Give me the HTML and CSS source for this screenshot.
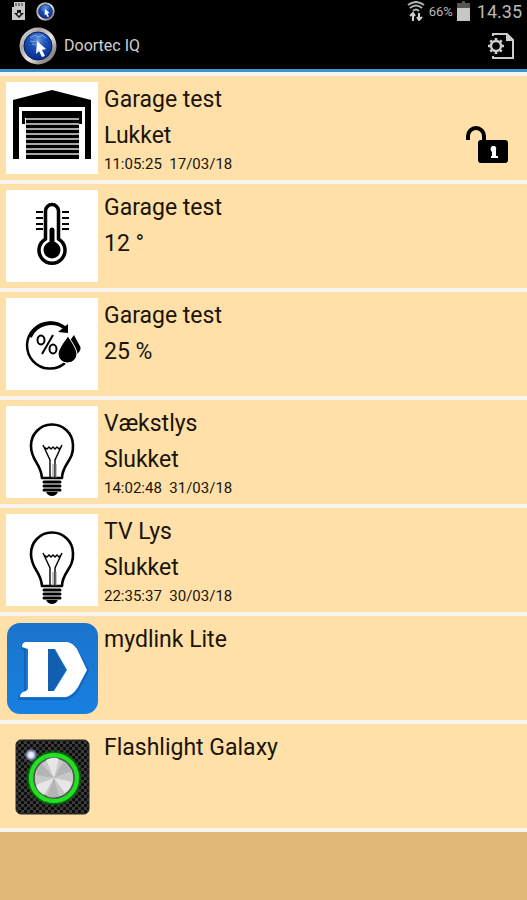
FILE: index.html
```html
<!DOCTYPE html>
<html lang="da">
<head>
  <meta charset="UTF-8">
  <meta name="viewport" content="width=device-width, initial-scale=1.0">
  <title>Doortec IQ</title>
  <link rel="stylesheet" href="styles.css">
</head>
<body>
  <!-- Shared icons -->
  <svg class="defs" width="0" height="0" aria-hidden="true">
    <defs>
      <linearGradient id="chrome" x1="0" y1="0" x2="1" y2="1">
        <stop offset="0" stop-color="#f2f2f2"/>
        <stop offset="0.3" stop-color="#a8a4a3"/>
        <stop offset="0.55" stop-color="#ece6e4"/>
        <stop offset="0.8" stop-color="#8c8684"/>
        <stop offset="1" stop-color="#d5d1cf"/>
      </linearGradient>
      <radialGradient id="globe" cx="0.5" cy="0.25" r="0.75">
        <stop offset="0" stop-color="#5f93dc"/>
        <stop offset="0.4" stop-color="#1c53b8"/>
        <stop offset="1" stop-color="#062a96"/>
      </radialGradient>
    </defs>
    <symbol id="logo" viewBox="0 0 38 38">
      <circle cx="19" cy="19" r="18.500" fill="url(#chrome)"/>
      <circle cx="19" cy="19" r="14" fill="url(#globe)" stroke="#0a1c4c" stroke-width="1"/>
      <path d="M11 11l5-3 3 2 4-2 4 3M11 14l5 1 3-2 2 3M13 17l4 1" fill="none" stroke="#9dbdf0" stroke-width="1" opacity="0.7"/>
      <path d="M18 14l9 8-4 1 3 6-3 1-3-6-3 3z" fill="#fff"/>
    </symbol>
    <symbol id="bulb" viewBox="0 0 92 92">
      <path d="M36 72C35 57 25 55 25 40a21 21 0 0 1 42-1C68 55 56 58 56 72z" fill="none" stroke="#000" stroke-width="2.600" stroke-linejoin="round"/>
      <path d="M37 39l7 15v18M56 39l-7 15v18M38 41l3 2 2-2 2 2 2-2 2 2 2-2 2 2 2-2" fill="none" stroke="#000" stroke-width="1.4"/>
      <path d="M47 58v14M50 58v14" stroke="#888" stroke-width="1"/>
      <path d="M38 76h16M38 80h16M38 84h16" stroke="#000" stroke-width="3" stroke-linecap="round"/>
      <path d="M40 86h12q-2 4-6 4t-6-4z"/>
    </symbol>
  </svg>

  <!-- Status bar -->
  <div class="status">
    <div class="status-group">
      <svg width="14" height="20" viewBox="0 0 14 20">
        <path d="M2 1h11v18H0V6h2z" fill="#c8c8c8"/>
        <path d="M4 2v3M7 2v3M10 2v3" stroke="#333" stroke-width="1"/>
        <path d="M5 9h4v3h3l-5 5-5-5h3z" fill="#111"/>
        <circle cx="7" cy="13" r="1.6" fill="#c8c8c8"/>
      </svg>
      <svg width="19" height="19"><use href="#logo"/></svg>
    </div>
    <div class="status-group status-right">
      <svg width="18" height="20" viewBox="0 0 18 20">
        <path d="M1 4q8-6 16 0M3 7q6-5 12 0M6 10q3-3 6 0" fill="none" stroke="#b4b4b4" stroke-width="2"/>
        <path d="M6 20v-7M3 15l3-3 2 3M12 12v7M10 16l2 3 3-3" fill="none" stroke="#d0d0d0" stroke-width="2"/>
      </svg>
      <span class="battery-text">66%</span>
      <svg width="13" height="20" viewBox="0 0 13 20">
        <path d="M5 0h3v2h5v5H0V2h5z" fill="#555"/>
        <path d="M0 7h13v13H0z" fill="#c6c6c6"/>
      </svg>
      <span class="clock">14.35</span>
    </div>
  </div>

  <!-- Header -->
  <header>
    <svg width="38" height="38"><use href="#logo"/></svg>
    <h1>Doortec IQ</h1>
    <button type="button" class="settings" aria-label="Indstillinger">
      <svg width="28" height="28" viewBox="0 0 28 28">
        <path d="M6 4V2h14l6 6v18H6v-2" fill="none" stroke="#ccc" stroke-width="2"/>
        <path d="M19 1v8h8z" fill="#ccc"/>
        <circle cx="9" cy="14" r="5" fill="none" stroke="#ccc" stroke-width="2.4"/>
        <g stroke="#ccc" stroke-width="2.6">
          <path d="M9 6v3M9 19v3M1 14h3M14 14h3"/>
          <path d="M3.3 8.3l2.2 2.2M12.5 17.5l2.2 2.2M3.3 19.7l2.2-2.2M12.5 10.5l2.2-2.2"/>
        </g>
      </svg>
    </button>
  </header>

  <!-- Device list -->
  <ul class="devices">
    <li>
      <svg class="thumb white" viewBox="0 0 92 92">
        <path d="M7 18L46 8l39 10v59h-6V25H13v52H7z"/>
        <path d="M16 29h60v7H16zM16 36h3v6h-3zM73 36h3v6h-3z"/>
        <path d="M20 36h53v41H20z"/>
        <path d="M20 37h53M20 42h53M20 47h53M20 52h53M20 57h53M20 62h53M20 67h53M20 72h53" stroke="#ddd" stroke-width="1.4"/>
      </svg>
      <div class="info">
        <h2>Garage test</h2>
        <p>Lukket</p>
        <time>11:05:25&nbsp; 17/03/18</time>
      </div>
      <button type="button" class="lock" aria-label="Lås op">
        <svg width="44" height="40" viewBox="0 0 44 40">
          <path d="M3 15v-4a8 8 0 0 1 16 0v6" fill="none" stroke="#000" stroke-width="4"/>
          <rect x="13" y="15" width="30" height="23" rx="3"/>
          <path d="M27 21h3q2 2 1 4v6h2v2h-7v-2h1v-4q-3-3 0-6z" fill="#fff"/>
        </svg>
      </button>
    </li>
    <li>
      <svg class="thumb white" viewBox="0 0 92 92">
        <path d="M39.500 49V21a6.500 6.500 0 0 1 13 0v28a13 13 0 1 1-13 0z" fill="none" stroke="#000" stroke-width="3.500"/>
        <circle cx="46" cy="60" r="8.500"/>
        <path d="M46 40v18" stroke="#000" stroke-width="5" stroke-linecap="round"/>
        <path d="M30 22h7M30 28h7M30 34h7M30 39h7M56 22h7M56 28h7M56 34h7M56 39h7" stroke="#000" stroke-width="2.200"/>
      </svg>
      <div class="info">
        <h2>Garage test</h2>
        <p>12 °</p>
      </div>
    </li>
    <li>
      <svg class="thumb white" viewBox="0 0 92 92">
        <path d="M59 65a23 23 0 1 1 1-34" fill="none" stroke="#000" stroke-width="2.500"/>
        <path d="M24 39a23 23 0 0 1 35-9" fill="none" stroke="#000" stroke-width="3.500"/>
        <path d="M62 26v9l-10-1z"/>
        <g fill="none" stroke="#000" stroke-width="2">
          <ellipse cx="35" cy="42" rx="3.500" ry="4.500"/>
          <ellipse cx="47" cy="51" rx="3.500" ry="4.500"/>
          <path d="M47 37L36 56"/>
        </g>
        <path d="M68 37q-6 7-5 15 2 7 8 4 5-4 3-8-3-5-6-11z"/>
        <path d="M62 38q-10 13-10 18a9.500 9 0 0 0 19 0q0-5-9-18z" stroke="#fff" stroke-width="1"/>
      </svg>
      <div class="info">
        <h2>Garage test</h2>
        <p>25 %</p>
      </div>
    </li>
    <li>
      <svg class="thumb white"><use href="#bulb"/></svg>
      <div class="info">
        <h2>Vækstlys</h2>
        <p>Slukket</p>
        <time>14:02:48&nbsp; 31/03/18</time>
      </div>
    </li>
    <li>
      <svg class="thumb white"><use href="#bulb"/></svg>
      <div class="info">
        <h2>TV Lys</h2>
        <p>Slukket</p>
        <time>22:35:37&nbsp; 30/03/18</time>
      </div>
    </li>
    <li>
      <svg class="thumb" viewBox="0 0 92 92">
        <defs>
          <linearGradient id="blue" x1="0" y1="0" x2="0" y2="1">
            <stop offset="0" stop-color="#1a74cc"/>
            <stop offset="1" stop-color="#1780e0"/>
          </linearGradient>
        </defs>
        <rect x="1" y="1" width="91" height="91" rx="13" fill="url(#blue)"/>
        <path d="M42 27h6l12 21-13 21h-5z" fill="#125fb2"/>
        <path d="M19 21h42q7 1 10 7l11 20-9 18q-5 9-13 11H13q0-5 6-7V28l-3-2q0-4 3-5z" fill="none" stroke="#0b4f9d" stroke-width="2" opacity="0.5"/>
        <path d="M19 20h42q6 1 10 7l10 21-9 17q-5 8-12 10H14q0-5 6-6l2-2V27l-6-2q0-4 3-5zM42 27v42h6l13-21-12-21z" fill="#fff" fill-rule="evenodd"/>
      </svg>
      <div class="info">
        <h2>mydlink Lite</h2>
      </div>
    </li>
    <li>
      <svg class="thumb" viewBox="0 4 92 92">
        <defs>
          <pattern id="mesh" width="6" height="6" patternUnits="userSpaceOnUse">
            <rect width="6" height="6" fill="#3c3c3c"/>
            <circle cx="1.500" cy="1.500" r="1.700" fill="#0b0b0b"/>
            <circle cx="4.500" cy="4.500" r="1.700" fill="#0b0b0b"/>
          </pattern>
          <radialGradient id="glow">
            <stop offset="0.7" stop-color="#13d013"/>
            <stop offset="0.86" stop-color="#0d8a0d"/>
            <stop offset="1" stop-color="#0a3a0a" stop-opacity="0"/>
          </radialGradient>
          <radialGradient id="spark">
            <stop offset="0" stop-color="#fff"/>
            <stop offset="0.4" stop-color="#d4dcff"/>
            <stop offset="1" stop-color="#8090d0" stop-opacity="0"/>
          </radialGradient>
        </defs>
        <rect x="10" y="14" width="73" height="74" rx="5" fill="url(#mesh)" stroke="#2a2a2a"/>
        <circle cx="48" cy="52" r="29" fill="url(#glow)"/>
        <circle cx="48" cy="52" r="23" fill="none" stroke="#22e022" stroke-width="4"/>
        <circle cx="48" cy="52" r="20" fill="#c8c8c8" stroke="#555" stroke-width="1.500"/>
        <path d="M48 52L40 34q8-4 13-1zM48 52l18 4q-2 8-7 11zM48 52L38 69q-7-4-8-10z" fill="#e6e6e6"/>
        <path d="M48 52l9-16q7 4 9 9zM48 52l-18-3q2-8 6-11zM48 52l5 18q-7 3-12 0z" fill="#b4b4b4"/>
        <circle cx="25" cy="29" r="7" fill="url(#spark)"/>
      </svg>
      <div class="info">
        <h2>Flashlight Galaxy</h2>
      </div>
    </li>
  </ul>
</body>
</html>
```

FILE: styles.css
```css
* {
  margin: 0;
  padding: 0;
  box-sizing: border-box;
}

body {
  font-family: Roboto, "Liberation Sans", sans-serif;
  background-color: #e0b878;
  color: #1a140a;
}

svg {
  display: block;
  flex-shrink: 0;
}

.defs {
  position: absolute;
}

button {
  background: none;
  border: none;
  cursor: pointer;
}

/* Status bar */
.status {
  display: flex;
  justify-content: space-between;
  height: 22px;
  padding: 0 5px 0 12px;
  background-color: #000;
  color: #b8b8b8;
}

.status-group {
  display: flex;
  align-items: center;
  gap: 10px;
}

.status-right {
  gap: 4px;
}

.battery-text {
  font-size: 13px;
}

.clock {
  padding-left: 3px;
  font-size: 18px;
}

/* Header */
header {
  display: flex;
  align-items: center;
  gap: 7px;
  height: 50px;
  padding: 0 12px 0 19px;
  background-color: #000;
  border-bottom: 3px solid #3399c4;
}

header h1 {
  flex: 1;
  font-size: 16px;
  font-weight: normal;
  color: #d0d0d0;
}

/* Device list */
.devices {
  list-style: none;
  border-top: 4px solid #f8f4ee;
}

.devices li {
  display: flex;
  align-items: flex-start;
  padding: 6px;
  background-color: #ffe0a8;
  border-bottom: 4px solid #f8f4ee;
}

.thumb {
  width: 92px;
  height: 92px;
}

.white {
  background-color: #fff;
}

.info {
  flex: 1;
  padding-left: 6px;
}

.info h2,
.info p {
  font-size: 23px;
  font-weight: normal;
  line-height: 36px;
}

.info time {
  display: block;
  font-size: 15px;
  line-height: 20px;
}

.lock {
  align-self: center;
  padding: 34px 12px 0 0;
}
```
